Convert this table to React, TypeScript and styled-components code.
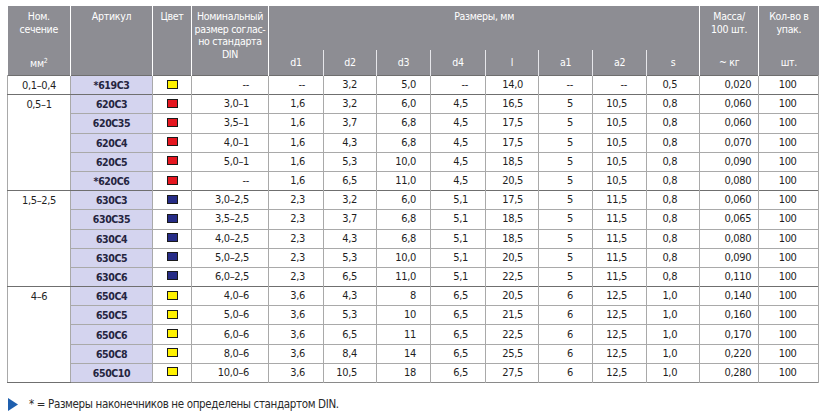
import styled, { createGlobalStyle } from 'styled-components';

const GlobalStyle = createGlobalStyle`
  html, body {
    margin: 0;
    padding: 0;
    background: #ffffff;
  }
  body {
    font-family: "Liberation Sans Narrow", "Arial Narrow", "DejaVu Sans Condensed", "Liberation Sans", sans-serif;
  }
`;

const Page = styled.div`
  padding: 6px 4px 0 7px;
  width: 811px;
`;

const Table = styled.table`
  width: 811px;
  table-layout: fixed;
  border-collapse: collapse;
  font-size: 11px;
  letter-spacing: -0.35px;
  color: #1f1f1f;
`;

const HeadCell = styled.th<{ $sub?: boolean; $middle?: boolean }>`
  background: #8d8d93;
  color: #ffffff;
  font-weight: normal;
  font-size: 10.5px;
  letter-spacing: -0.3px;
  line-height: 12.7px;
  text-align: center;
  white-space: nowrap;
  vertical-align: ${p => (p.$middle ? 'middle' : 'top')};
  padding: ${p => (p.$sub ? '0' : '4px 0 0')};
  border-left: 1px solid #ffffff;
  height: ${p => (p.$sub ? '25px' : '40px')};

  &:first-child {
    border-left: none;
  }
`;

const SubCell = styled(HeadCell)<{ $tick?: boolean }>`
  border-left: 1px solid ${p => (p.$tick ? '#e6e6ea' : '#ffffff')};
`;

const Sup = styled.sup`
  font-size: 7px;
  vertical-align: 4px;
`;

const Row = styled.tr<{ $groupStart?: boolean; $last?: boolean }>`
  height: 19.2px;
  border-top: 1px solid ${p => (p.$groupStart ? '#6f6f6f' : '#a9a9a9')};
  border-bottom: ${p => (p.$last ? '1px solid #8a8a8a' : 'none')};
`;

const Cell = styled.td<{ $align?: 'left' | 'right' | 'center'; $pad?: number }>`
  border-left: 1px solid #a9a9a9;
  border-right: 1px solid #a9a9a9;
  padding: 0 ${p => p.$pad ?? 2}px 0 0;
  text-align: ${p => p.$align ?? 'right'};
  vertical-align: middle;
  line-height: 14px;
  white-space: nowrap;
`;

const SectionCell = styled.td`
  border: 1px solid #a9a9a9;
  border-top-color: #6f6f6f;
  border-bottom-color: #6f6f6f;
  text-align: center;
  vertical-align: top;
  padding: 3px 0 0;
  line-height: 14px;
  white-space: nowrap;
`;

const ArticleCell = styled.td`
  background: #d4d4ef;
  border-left: 1px solid #a9a9a9;
  border-right: 1px solid #a9a9a9;
  color: #25253f;
  font-size: 10.5px;
  font-weight: bold;
  letter-spacing: -0.4px;
  text-align: center;
  vertical-align: middle;
  line-height: 14px;
  white-space: nowrap;
`;

const ColorCell = styled(Cell)`
  text-align: center;
  padding: 0;
`;

const Swatch = styled.span<{ $color: string }>`
  display: inline-block;
  width: 9px;
  height: 7px;
  border: 1px solid #1a1a1a;
  background: ${p => p.$color};
  vertical-align: middle;
  margin-top: -2px;
`;

const Note = styled.div`
  display: flex;
  align-items: center;
  gap: 11px;
  margin-top: 14px;
  font-size: 11.5px;
  letter-spacing: -0.35px;
  color: #2a2a2a;
`;

const Arrow = styled.svg`
  width: 10px;
  height: 13px;
  margin-left: 1px;
`;

type Item = {
  art: string;
  color: string;
  nom: string;
  v: string[];
};

type Group = { section: string; items: Item[] };

const YELLOW = '#fff200';
const RED = '#e5161f';
const BLUE = '#262c86';

const groups: Group[] = [
  {
    section: '0,1–0,4',
    items: [
      { art: '*619C3', color: YELLOW, nom: '--', v: ['--', '3,2', '5,0', '--', '14,0', '--', '--', '0,5', '0,020', '100'] },
    ],
  },
  {
    section: '0,5–1',
    items: [
      { art: '620C3', color: RED, nom: '3,0–1', v: ['1,6', '3,2', '6,0', '4,5', '16,5', '5', '10,5', '0,8', '0,060', '100'] },
      { art: '620C35', color: RED, nom: '3,5–1', v: ['1,6', '3,7', '6,8', '4,5', '17,5', '5', '10,5', '0,8', '0,060', '100'] },
      { art: '620C4', color: RED, nom: '4,0–1', v: ['1,6', '4,3', '6,8', '4,5', '17,5', '5', '10,5', '0,8', '0,070', '100'] },
      { art: '620C5', color: RED, nom: '5,0–1', v: ['1,6', '5,3', '10,0', '4,5', '18,5', '5', '10,5', '0,8', '0,090', '100'] },
      { art: '*620C6', color: RED, nom: '--', v: ['1,6', '6,5', '11,0', '4,5', '20,5', '5', '10,5', '0,8', '0,080', '100'] },
    ],
  },
  {
    section: '1,5–2,5',
    items: [
      { art: '630C3', color: BLUE, nom: '3,0–2,5', v: ['2,3', '3,2', '6,0', '5,1', '17,5', '5', '11,5', '0,8', '0,060', '100'] },
      { art: '630C35', color: BLUE, nom: '3,5–2,5', v: ['2,3', '3,7', '6,8', '5,1', '18,5', '5', '11,5', '0,8', '0,065', '100'] },
      { art: '630C4', color: BLUE, nom: '4,0–2,5', v: ['2,3', '4,3', '6,8', '5,1', '18,5', '5', '11,5', '0,8', '0,080', '100'] },
      { art: '630C5', color: BLUE, nom: '5,0–2,5', v: ['2,3', '5,3', '10,0', '5,1', '20,5', '5', '11,5', '0,8', '0,090', '100'] },
      { art: '630C6', color: BLUE, nom: '6,0–2,5', v: ['2,3', '6,5', '11,0', '5,1', '22,5', '5', '11,5', '0,8', '0,110', '100'] },
    ],
  },
  {
    section: '4–6',
    items: [
      { art: '650C4', color: YELLOW, nom: '4,0–6', v: ['3,6', '4,3', '8', '6,5', '20,5', '6', '12,5', '1,0', '0,140', '100'] },
      { art: '650C5', color: YELLOW, nom: '5,0–6', v: ['3,6', '5,3', '10', '6,5', '21,5', '6', '12,5', '1,0', '0,160', '100'] },
      { art: '650C6', color: YELLOW, nom: '6,0–6', v: ['3,6', '6,5', '11', '6,5', '22,5', '6', '12,5', '1,0', '0,170', '100'] },
      { art: '650C8', color: YELLOW, nom: '8,0–6', v: ['3,6', '8,4', '14', '6,5', '25,5', '6', '12,5', '1,0', '0,220', '100'] },
      { art: '650C10', color: YELLOW, nom: '10,0–6', v: ['3,6', '10,5', '18', '6,5', '27,5', '6', '12,5', '1,0', '0,280', '100'] },
    ],
  },
];

const colWidths = [63, 82, 39, 77, 55, 53, 54, 55, 53, 54, 54, 53, 59, 60];
// right padding of d1 … Масса, the last column is centred
const valuePad = [18, 19, 14, 17, 15, 19, 19, 22, 7];
const dims = ['d1', 'd2', 'd3', 'd4', 'l', 'a1', 'a2', 's'];
const lastGroup = groups.length - 1;

export default function App() {
  return (
    <>
      <GlobalStyle />
      <Page>
        <Table>
          <colgroup>
            {colWidths.map((w, i) => (
              <col key={i} style={{ width: w }} />
            ))}
          </colgroup>
          <thead>
            <tr>
              <HeadCell>
                Ном.
                <br />
                сечение
              </HeadCell>
              <HeadCell rowSpan={2}>Артикул</HeadCell>
              <HeadCell rowSpan={2}>Цвет</HeadCell>
              <HeadCell rowSpan={2}>
                Номинальный
                <br />
                размер соглас-
                <br />
                но стандарта
                <br />
                DIN
              </HeadCell>
              <HeadCell colSpan={8}>Размеры, мм</HeadCell>
              <HeadCell>
                Масса/
                <br />
                100 шт.
              </HeadCell>
              <HeadCell>
                Кол-во в
                <br />
                упак.
              </HeadCell>
            </tr>
            <tr>
              <SubCell $sub $middle style={{ borderLeft: 'none' }}>
                мм<Sup>2</Sup>
              </SubCell>
              {dims.map((d, i) => (
                <SubCell key={d} $sub $middle $tick={i > 0}>
                  {d}
                </SubCell>
              ))}
              <SubCell $sub $middle>~ кг</SubCell>
              <SubCell $sub $middle>шт.</SubCell>
            </tr>
          </thead>
          <tbody>
            {groups.map((g, gi) =>
              g.items.map((it, idx) => (
                <Row
                  key={it.art}
                  $groupStart={idx === 0}
                  $last={gi === lastGroup && idx === g.items.length - 1}
                >
                  {idx === 0 && <SectionCell rowSpan={g.items.length}>{g.section}</SectionCell>}
                  <ArticleCell>{it.art}</ArticleCell>
                  <ColorCell>
                    <Swatch $color={it.color} />
                  </ColorCell>
                  <Cell $pad={19}>{it.nom}</Cell>
                  {it.v.map((val, i) =>
                    i === it.v.length - 1 ? (
                      <Cell key={i} $align="center">
                        {val}
                      </Cell>
                    ) : (
                      <Cell key={i} $pad={valuePad[i]}>
                        {val}
                      </Cell>
                    )
                  )}
                </Row>
              ))
            )}
          </tbody>
        </Table>
        <Note>
          <Arrow viewBox="0 0 10 13">
            <polygon points="0,0 10,6.5 0,13" fill="#1f5fae" />
          </Arrow>
          <span>* = Размеры наконечников не определены стандартом DIN.</span>
        </Note>
      </Page>
    </>
  );
}
